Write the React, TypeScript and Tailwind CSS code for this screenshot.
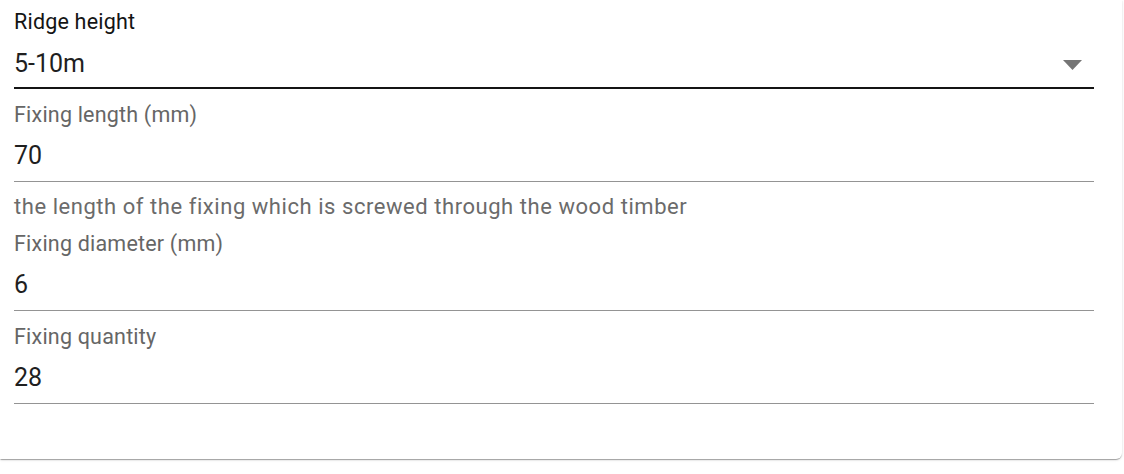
import React from "react";

const font = { fontFamily: "Roboto, 'Noto Sans', Arial, sans-serif" };

function Field({
  label,
  value,
  helper,
}: {
  label: string;
  value: string;
  helper?: string;
}) {
  return (
    <div className="flex flex-col">
      <div className="flex flex-col border-b border-[#949494] pt-[13px] pb-[10px]">
        <div className="text-[21.5px] leading-[26px] text-[#666666] tracking-[0.2px]">{label}</div>
        <div className="mt-[13px] text-[25px] leading-[30px] text-[#1f1f1f]">{value}</div>
      </div>
      {helper && (
        <div className="mt-[12px] mb-[-2px] text-[22px] leading-[26px] text-[#6b6b6b] tracking-[0.55px]">
          {helper}
        </div>
      )}
    </div>
  );
}

export default function App() {
  return (
    <div className="w-[1124px] h-[474px] bg-white overflow-hidden" style={font}>
      <div className="w-[1122px] h-[459px] bg-white rounded-br-[6px] shadow-[0px_2px_1px_-1px_rgba(0,0,0,0.2),0px_1px_1px_0px_rgba(0,0,0,0.14),0px_1px_3px_0px_rgba(0,0,0,0.12)] pl-[14px] pr-[28px]">
        <div className="flex flex-col">
          <div className="flex flex-col border-b-2 border-[#141414] pt-[9px] pb-[8px]">
            <div className="text-[21.5px] leading-[26px] text-[#141414] tracking-[0.2px]">Ridge height</div>
            <div className="mt-[14px] flex items-center justify-between">
              <span className="text-[25px] leading-[30px] text-[#1f1f1f]">5-10m</span>
              <svg width="19" height="10" viewBox="0 0 19 10" className="mr-[12px] mt-[2px]">
                <polygon points="0,0 19,0 9.5,10" fill="#757575" />
              </svg>
            </div>
          </div>
          <Field
            label="Fixing length (mm)"
            value="70"
            helper="the length of the fixing which is screwed through the wood timber"
          />
          <Field label="Fixing diameter (mm)" value="6" />
          <Field label="Fixing quantity" value="28" />
        </div>
      </div>
    </div>
  );
}
